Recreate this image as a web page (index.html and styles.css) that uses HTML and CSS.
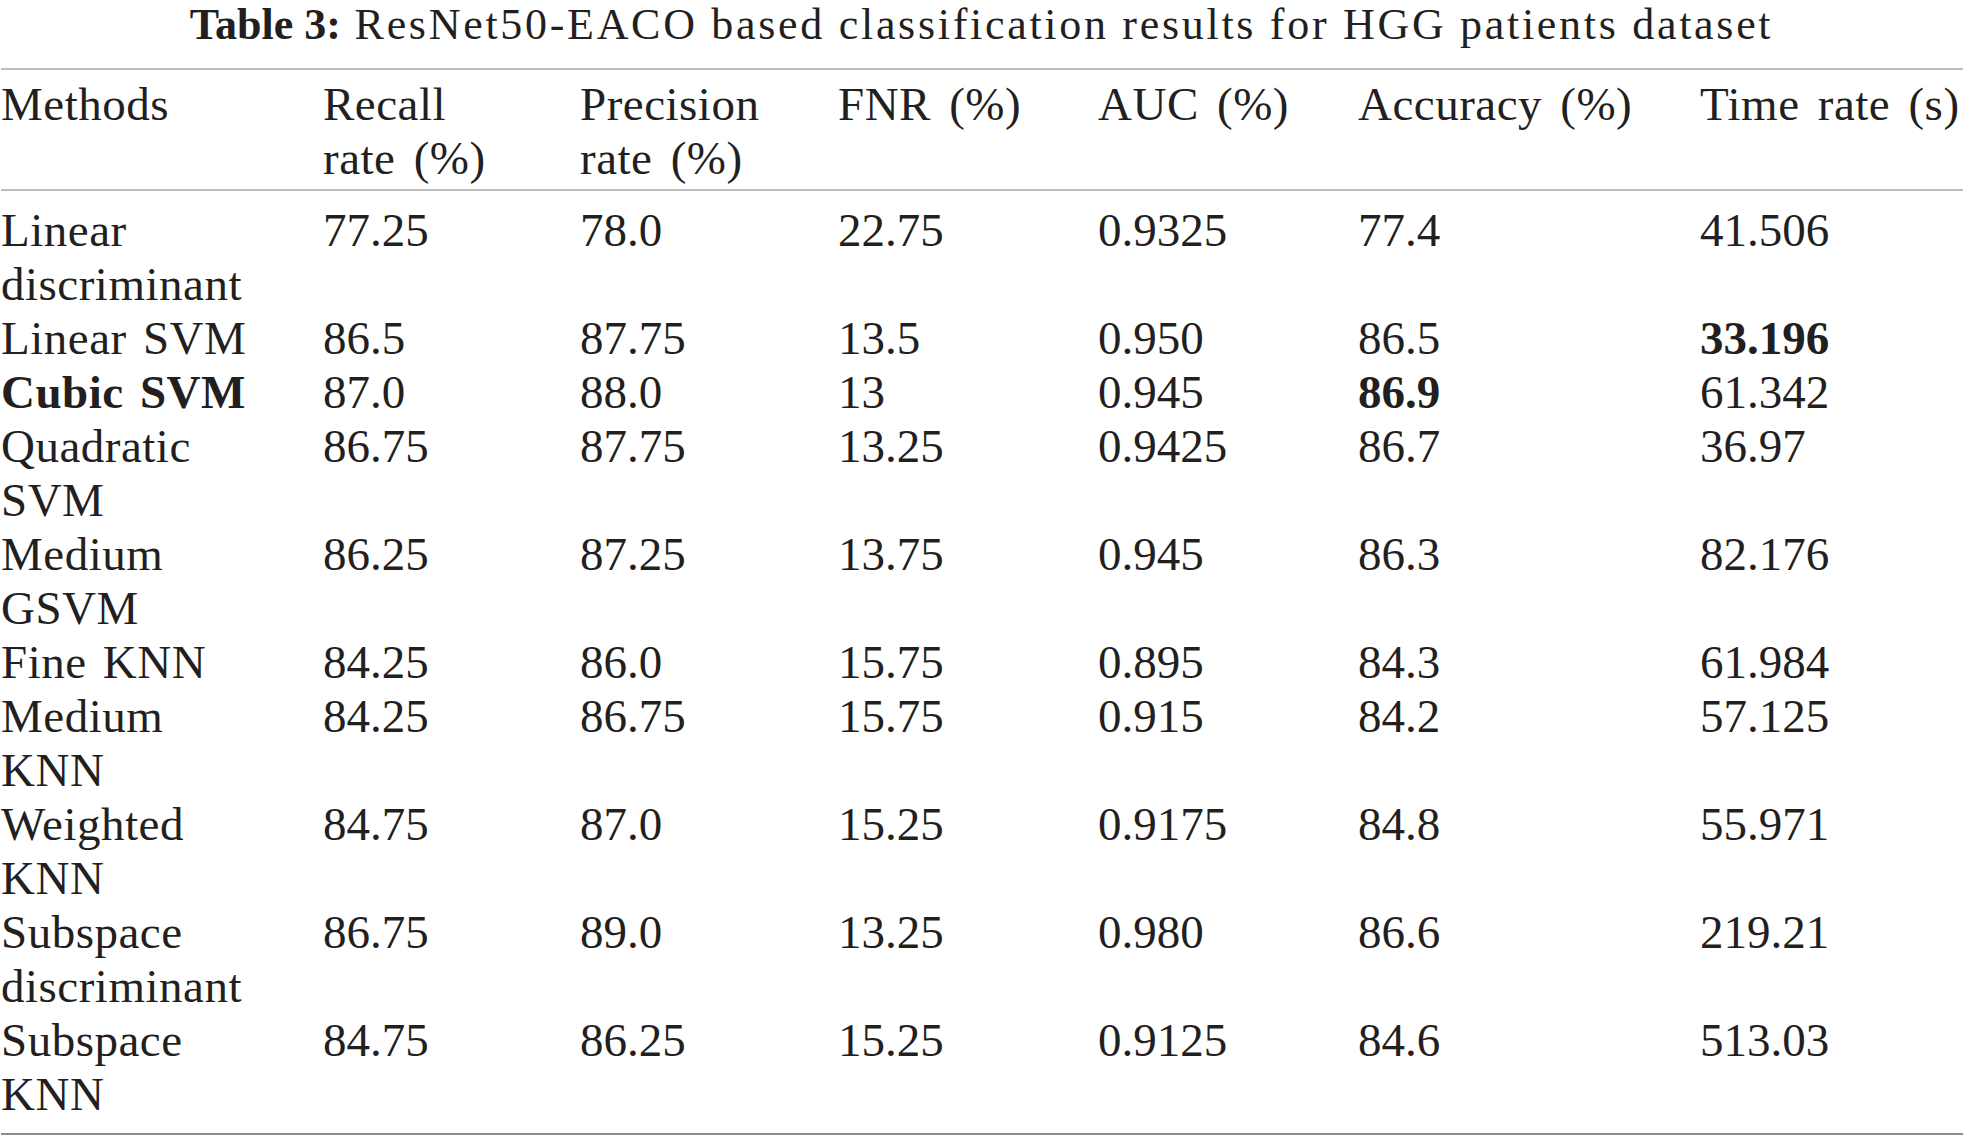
FILE: index.html
```html
<!DOCTYPE html>
<html lang="en">
<head>
<meta charset="utf-8">
<title>Table 3</title>
<link rel="stylesheet" href="styles.css">
</head>
<body>
<div class="caption"><b>Table 3:</b><span class="caption-text"> ResNet50-EACO based classification results for HGG patients dataset</span></div>
<table class="results">
  <colgroup>
    <col class="c-method">
    <col class="c-recall">
    <col class="c-prec">
    <col class="c-fnr">
    <col class="c-auc">
    <col class="c-acc">
    <col class="c-time">
  </colgroup>
  <thead>
    <tr>
      <th class="m">Methods</th>
      <th class="r">Recall rate (%)</th>
      <th class="p">Precision rate (%)</th>
      <th>FNR (%)</th>
      <th>AUC (%)</th>
      <th>Accuracy (%)</th>
      <th>Time rate (s)</th>
    </tr>
  </thead>
  <tbody>
    <tr class="first"><td class="m">Linear discriminant</td><td>77.25</td><td>78.0</td><td>22.75</td><td>0.9325</td><td>77.4</td><td>41.506</td></tr>
    <tr><td class="m">Linear SVM</td><td>86.5</td><td>87.75</td><td>13.5</td><td>0.950</td><td>86.5</td><td><b>33.196</b></td></tr>
    <tr><td class="m"><b>Cubic SVM</b></td><td>87.0</td><td>88.0</td><td>13</td><td>0.945</td><td><b>86.9</b></td><td>61.342</td></tr>
    <tr><td class="m">Quadratic SVM</td><td>86.75</td><td>87.75</td><td>13.25</td><td>0.9425</td><td>86.7</td><td>36.97</td></tr>
    <tr><td class="m">Medium GSVM</td><td>86.25</td><td>87.25</td><td>13.75</td><td>0.945</td><td>86.3</td><td>82.176</td></tr>
    <tr><td class="m">Fine KNN</td><td>84.25</td><td>86.0</td><td>15.75</td><td>0.895</td><td>84.3</td><td>61.984</td></tr>
    <tr><td class="m">Medium KNN</td><td>84.25</td><td>86.75</td><td>15.75</td><td>0.915</td><td>84.2</td><td>57.125</td></tr>
    <tr><td class="m">Weighted KNN</td><td>84.75</td><td>87.0</td><td>15.25</td><td>0.9175</td><td>84.8</td><td>55.971</td></tr>
    <tr><td class="m">Subspace discriminant</td><td>86.75</td><td>89.0</td><td>13.25</td><td>0.980</td><td>86.6</td><td>219.21</td></tr>
    <tr class="last"><td class="m">Subspace KNN</td><td>84.75</td><td>86.25</td><td>15.25</td><td>0.9125</td><td>84.6</td><td>513.03</td></tr>
  </tbody>
</table>
</body>
</html>
```
FILE: styles.css
```css
html, body {
  margin: 0;
  padding: 0;
  background: #ffffff;
}

body {
  width: 1963px;
  font-family: "Liberation Serif", "Times New Roman", serif;
  color: #231f20;
}

.caption {
  font-size: 44px;
  line-height: 49px;
  height: 49px;
  text-align: center;
  margin: 0 0 19px 0;
  white-space: nowrap;
}

.caption b {
  font-weight: bold;
}

.caption-text {
  letter-spacing: 2.7px;
}

.results {
  width: 1962px;
  margin-left: 1px;
  border-collapse: collapse;
  table-layout: fixed;
  font-size: 47px;
  line-height: 54px;
}

.c-method { width: 322px; }
.c-recall { width: 257px; }
.c-prec { width: 258px; }
.c-fnr { width: 260px; }
.c-auc { width: 260px; }
.c-acc { width: 342px; }
.c-time { width: 263px; }

.results thead tr {
  border-top: 2px solid #bdbdbd;
  border-bottom: 2px solid #bdbdbd;
}

.results th {
  font-weight: normal;
  text-align: left;
  vertical-align: top;
  padding: 7px 0 4px 0;
  white-space: nowrap;
  letter-spacing: 0.5px;
  word-spacing: 6px;
}

.results th.m { white-space: normal; padding-right: 60px; }
.results th.r { white-space: normal; padding-right: 55px; }
.results th.p { white-space: normal; padding-right: 40px; }

.results td {
  text-align: left;
  vertical-align: top;
  padding: 0;
  white-space: nowrap;
}

.results td.m {
  white-space: normal;
  padding-right: 62px;
  letter-spacing: 0.5px;
  word-spacing: 4px;
}

.results tr.first td { padding-top: 12px; }
.results tr.last td { padding-bottom: 12px; }

.results tbody tr.last {
  border-bottom: 2px solid #8c8c8c;
}

.results b {
  font-weight: bold;
}
```
